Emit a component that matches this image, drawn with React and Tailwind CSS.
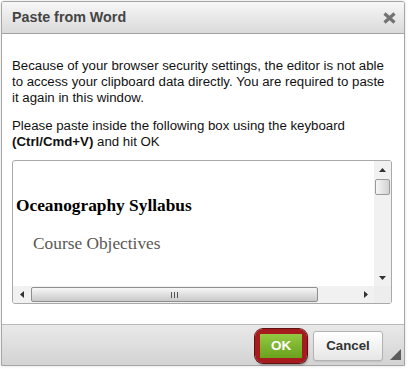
export default function App() {
  const sans = { fontFamily: '"Liberation Sans", Arial, sans-serif' };
  const serif = { fontFamily: '"Liberation Serif", "Times New Roman", serif' };
  return (
    <div className="w-[408px] h-[369px] bg-white overflow-hidden pl-[1px] pt-[1px]" style={sans}>
      <div className="w-[404px] h-[365px] border border-[#a6a6a6] rounded-t-[3px] flex flex-col shadow-[0_0_3px_rgba(0,0,0,0.15)] bg-white">
        {/* Title bar */}
        <div className="h-[32px] shrink-0 flex items-center justify-between pl-[10px] pr-[8px] border-b border-[#a3a3a3] bg-gradient-to-b from-[#f7f7f7] to-[#dadada] rounded-t-[2px]">
          <span className="text-[14.3px] font-bold text-[#444]">Paste from Word</span>
          <svg width="13" height="12" viewBox="0 0 13 12" className="mt-[1px]">
            <path d="M1.5 1.5 L11.5 10.5 M11.5 1.5 L1.5 10.5" stroke="#737373" strokeWidth="3.2" strokeLinecap="butt" />
          </svg>
        </div>
        {/* Body */}
        <div className="h-[290px] shrink-0 px-[10px] pt-[24px] text-[13.25px] leading-[16px] text-[#111]">
          <p className="whitespace-nowrap">
            Because of your browser security settings, the editor is not able
            <br />
            to access your clipboard data directly. You are required to paste
            <br />
            it again in this window.
          </p>
          <p className="mt-[12px] whitespace-nowrap">
            Please paste inside the following box using the keyboard
            <br />
            <b>(Ctrl/Cmd+V)</b> and hit OK
          </p>
          <div className="mt-[10px] w-[380px] h-[144px] border border-[#a9a9a9] rounded-[3px] overflow-hidden flex flex-col">
            <div className="h-[125px] flex">
              <div className="flex-1 pt-[35px] pl-[3px] text-black" style={serif}>
                <div className="text-[17.33px] leading-[20px] font-bold">Oceanography Syllabus</div>
                <div className="mt-[17.5px] ml-[17px] text-[17.33px] leading-[20px] text-[#5a5754]">Course Objectives</div>
              </div>
              {/* vertical scrollbar */}
              <div className="w-[17px] flex flex-col bg-[#f1f1f1]">
                <div className="h-[17px] flex items-center justify-center">
                  <svg width="7" height="4" viewBox="0 0 7 4"><path d="M3.5 0 L7 4 L0 4 Z" fill="#333" /></svg>
                </div>
                <div className="mx-[1px] mt-[1px] h-[16px] rounded-[2px] border border-[#9a9a9a] bg-gradient-to-r from-[#f6f6f6] to-[#d2d2d2]" />
                <div className="flex-1" />
                <div className="h-[17px] flex items-center justify-center">
                  <svg width="7" height="4" viewBox="0 0 7 4"><path d="M0 0 L7 0 L3.5 4 Z" fill="#333" /></svg>
                </div>
              </div>
            </div>
            {/* horizontal scrollbar */}
            <div className="h-[17px] flex bg-[#f1f1f1]">
              <div className="w-[17px] flex items-center justify-center">
                <svg width="4" height="7" viewBox="0 0 4 7"><path d="M0 3.5 L4 0 L4 7 Z" fill="#333" /></svg>
              </div>
              <div className="ml-[1px] mt-[1px] w-[287px] h-[15px] rounded-[2px] border border-[#8f8f8f] bg-gradient-to-b from-[#f7f7f7] to-[#c9c9c9] flex items-center justify-center gap-[2px]">
                <div className="w-[1px] h-[6px] bg-[#555]" />
                <div className="w-[1px] h-[6px] bg-[#555]" />
                <div className="w-[1px] h-[6px] bg-[#555]" />
              </div>
              <div className="flex-1" />
              <div className="w-[17px] flex items-center justify-center">
                <svg width="4" height="7" viewBox="0 0 4 7"><path d="M0 0 L4 3.5 L0 7 Z" fill="#333" /></svg>
              </div>
              <div className="w-[17px] bg-[#ededed]" />
            </div>
          </div>
        </div>
        {/* Footer */}
        <div className="flex-1 border-t border-[#b9b9b9] bg-gradient-to-b from-[#e9e9e9] to-[#d3d3d3] flex items-start relative">
          <div className="ml-[253px] mt-[4px] rounded-[8px] border-[5px] border-[#a51b1e] shadow-[0_0_0_1px_#5e1212,inset_0_0_0_1px_#6e1515,1px_2px_2px_rgba(0,0,0,0.35)]">
            <div className="w-[42px] h-[24px] bg-gradient-to-b from-[#93c942] to-[#6aa21c] flex items-center justify-center text-white text-[13.5px] font-bold">
              OK
            </div>
          </div>
          <div className="ml-[6px] mt-[6px] w-[70px] h-[30px] rounded-[3px] border border-[#b3b3b3] bg-gradient-to-b from-white to-[#e6e6e6] shadow-[0_1px_1px_rgba(0,0,0,0.1)] flex items-center justify-center text-[13.25px] font-bold text-[#333]">
            Cancel
          </div>
          <svg width="11" height="11" viewBox="0 0 11 11" className="absolute right-[3px] bottom-[5px]">
            <path d="M11 0 L11 11 L0 11 Z" fill="#5c5c5c" />
          </svg>
        </div>
      </div>
    </div>
  );
}
